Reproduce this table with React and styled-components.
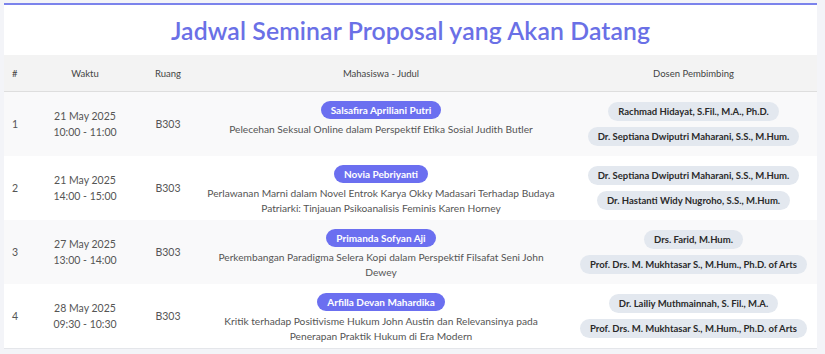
import React from "react";
import styled, { createGlobalStyle } from "styled-components";

const GlobalStyle = createGlobalStyle`
  html, body {
    margin: 0;
    padding: 0;
    background: #f3f4f8;
    font-family: Lato, "Noto Sans", sans-serif;
  }
`;

const Page = styled.div`
  padding: 3px 8px 0 4px;
  height: 354px;
  box-sizing: border-box;
  overflow: hidden;
`;

const Card = styled.div`
  background: #fff;
  border-top: 2px solid #7b83ec;
  border-bottom: 1px solid #e4e6ea;
`;

const Title = styled.h2`
  margin: 0;
  height: 50px;
  display: flex;
  align-items: center;
  justify-content: center;
  font-size: 24.8px;
  font-weight: 600;
  color: #6a70e6;
  letter-spacing: 0.1px;
`;

const Table = styled.table`
  width: 100%;
  border-collapse: collapse;
  table-layout: fixed;
`;

const Th = styled.th`
  background: #f3f3f3;
  height: 36px;
  padding: 0;
  font-size: 9.5px;
  font-weight: 400;
  color: #444;
  border-bottom: 1px solid #dedede;
  text-align: ${(p) => p.$align || "center"};
  padding-left: ${(p) => p.$pl || 0}px;
`;

const Row = styled.tr`
  background: ${(p) => (p.$odd ? "#f9f9fa" : "#fff")};
  height: 64px;
`;

const Td = styled.td`
  padding: 0;
  font-size: 10.5px;
  color: #555;
  text-align: ${(p) => p.$align || "center"};
  padding-left: ${(p) => p.$pl || 0}px;
  vertical-align: middle;
  line-height: 16px;
`;

const TopTd = styled(Td)`
  vertical-align: top;
  padding-top: 9px;
  line-height: 15px;
`;

const Stack = styled.div`
  display: flex;
  flex-direction: column;
  align-items: center;
  gap: ${(p) => p.$gap}px;
`;

const StudentBadge = styled.span`
  display: inline-block;
  background: #6b6ff0;
  color: #fff;
  font-weight: 700;
  font-size: 10px;
  line-height: 18px;
  padding: 0 10px;
  border-radius: 9px;
`;

const Thesis = styled.div`
  max-width: 352px;
  font-size: 10.2px;
  color: #555;
`;

const LecturerPill = styled.span`
  display: inline-block;
  background: #e3e8ef;
  color: #2a2a2a;
  font-weight: 700;
  font-size: 9.5px;
  line-height: 19px;
  padding: 0 10px;
  border-radius: 10px;
`;

const rows = [
  {
    date: "21 May 2025",
    time: "10:00 - 11:00",
    room: "B303",
    student: "Salsafira Apriliani Putri",
    title: "Pelecehan Seksual Online dalam Perspektif Etika Sosial Judith Butler",
    lecturers: [
      "Rachmad Hidayat, S.Fil., M.A., Ph.D.",
      "Dr. Septiana Dwiputri Maharani, S.S., M.Hum.",
    ],
  },
  {
    date: "21 May 2025",
    time: "14:00 - 15:00",
    room: "B303",
    student: "Novia Pebriyanti",
    title:
      "Perlawanan Marni dalam Novel Entrok Karya Okky Madasari Terhadap Budaya Patriarki: Tinjauan Psikoanalisis Feminis Karen Horney",
    lecturers: [
      "Dr. Septiana Dwiputri Maharani, S.S., M.Hum.",
      "Dr. Hastanti Widy Nugroho, S.S., M.Hum.",
    ],
  },
  {
    date: "27 May 2025",
    time: "13:00 - 14:00",
    room: "B303",
    student: "Primanda Sofyan Aji",
    title: "Perkembangan Paradigma Selera Kopi dalam Perspektif Filsafat Seni John Dewey",
    lecturers: ["Drs. Farid, M.Hum.", "Prof. Drs. M. Mukhtasar S., M.Hum., Ph.D. of Arts"],
  },
  {
    date: "28 May 2025",
    time: "09:30 - 10:30",
    room: "B303",
    student: "Arfilla Devan Mahardika",
    title:
      "Kritik terhadap Positivisme Hukum John Austin dan Relevansinya pada Penerapan Praktik Hukum di Era Modern",
    lecturers: [
      "Dr. Lailiy Muthmainnah, S. Fil., M.A.",
      "Prof. Drs. M. Mukhtasar S., M.Hum., Ph.D. of Arts",
    ],
  },
];

export default function App() {
  return (
    <>
      <GlobalStyle />
      <Page>
        <Card>
          <Title>Jadwal Seminar Proposal yang Akan Datang</Title>
          <Table>
            <colgroup>
              <col style={{ width: 36 }} />
              <col style={{ width: 90 }} />
              <col style={{ width: 76 }} />
              <col style={{ width: 350 }} />
              <col />
            </colgroup>
            <thead>
              <tr>
                <Th $align="left" $pl={8}>#</Th>
                <Th>Waktu</Th>
                <Th>Ruang</Th>
                <Th>Mahasiswa - Judul</Th>
                <Th $pl={14}>Dosen Pembimbing</Th>
              </tr>
            </thead>
            <tbody>
              {rows.map((r, i) => (
                <Row key={i} $odd={i % 2 === 0}>
                  <Td $align="left" $pl={8}>{i + 1}</Td>
                  <Td>
                    {r.date}
                    <br />
                    {r.time}
                  </Td>
                  <Td>{r.room}</Td>
                  <TopTd>
                    <Stack $gap={3}>
                      <StudentBadge>{r.student}</StudentBadge>
                      <Thesis>{r.title}</Thesis>
                    </Stack>
                  </TopTd>
                  <Td $pl={14}>
                    <Stack $gap={6}>
                      {r.lecturers.map((l) => (
                        <LecturerPill key={l}>{l}</LecturerPill>
                      ))}
                    </Stack>
                  </Td>
                </Row>
              ))}
            </tbody>
          </Table>
        </Card>
      </Page>
    </>
  );
}
